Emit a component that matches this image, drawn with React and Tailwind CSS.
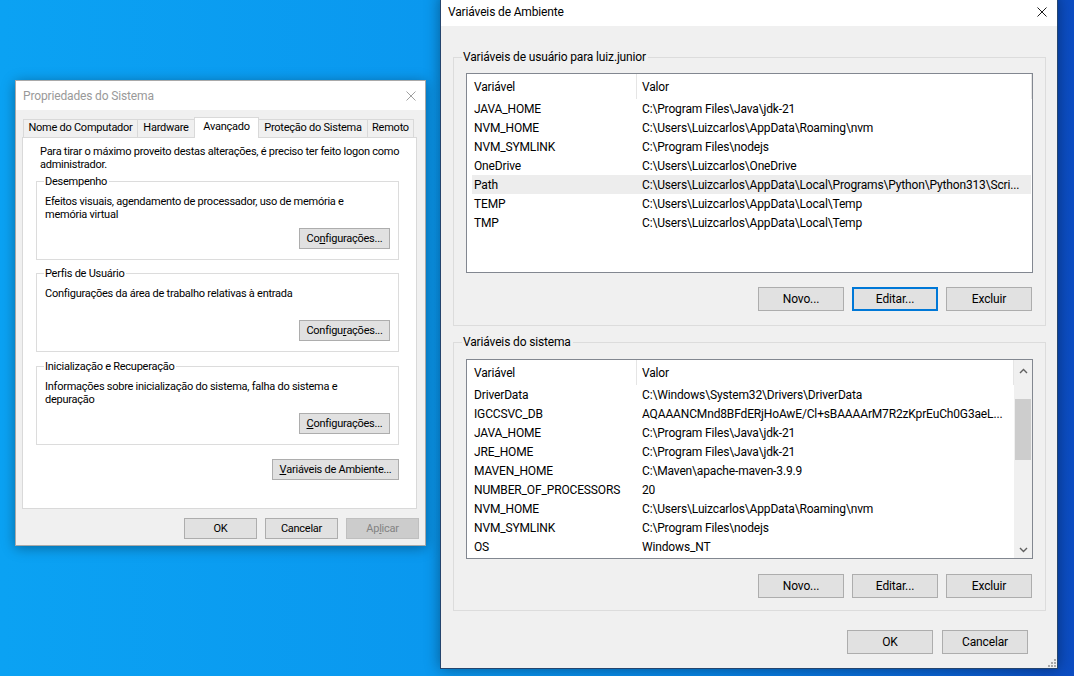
import clsx from 'clsx';

const USER_VARS = [
  ['JAVA_HOME', 'C:\\Program Files\\Java\\jdk-21'],
  ['NVM_HOME', 'C:\\Users\\Luizcarlos\\AppData\\Roaming\\nvm'],
  ['NVM_SYMLINK', 'C:\\Program Files\\nodejs'],
  ['OneDrive', 'C:\\Users\\Luizcarlos\\OneDrive'],
  ['Path', 'C:\\Users\\Luizcarlos\\AppData\\Local\\Programs\\Python\\Python313\\Scri...', true],
  ['TEMP', 'C:\\Users\\Luizcarlos\\AppData\\Local\\Temp'],
  ['TMP', 'C:\\Users\\Luizcarlos\\AppData\\Local\\Temp'],
];

const SYSTEM_VARS = [
  ['DriverData', 'C:\\Windows\\System32\\Drivers\\DriverData'],
  ['IGCCSVC_DB', 'AQAAANCMnd8BFdERjHoAwE/Cl+sBAAAArM7R2zKprEuCh0G3aeL...'],
  ['JAVA_HOME', 'C:\\Program Files\\Java\\jdk-21'],
  ['JRE_HOME', 'C:\\Program Files\\Java\\jdk-21'],
  ['MAVEN_HOME', 'C:\\Maven\\apache-maven-3.9.9'],
  ['NUMBER_OF_PROCESSORS', '20'],
  ['NVM_HOME', 'C:\\Users\\Luizcarlos\\AppData\\Roaming\\nvm'],
  ['NVM_SYMLINK', 'C:\\Program Files\\nodejs'],
  ['OS', 'Windows_NT'],
];

const TABS = [
  ['Nome do Computador', 'w-[115px]'],
  ['Hardware', 'w-[58px]'],
  ['Avançado', 'w-[65px]', true],
  ['Proteção do Sistema', 'w-[110px]'],
  ['Remoto', 'w-[47px]'],
];

function WinButton({ children, className, focused, disabled }) {
  return (
    <button
      type="button"
      className={clsx(
        'flex shrink-0 items-center justify-center leading-none',
        disabled
          ? 'border border-[#bfbfbf] bg-[#cccccc] text-[#838383]'
          : focused
            ? 'border-2 border-[#0078d7] bg-[#e1e1e1]'
            : 'border border-[#adadad] bg-[#e1e1e1]',
        className,
      )}
    >
      {children}
    </button>
  );
}

function CloseX({ color }) {
  return (
    <svg width="10" height="10" viewBox="0 0 10 10" className="block">
      <path d="M0.5 0.5L9.5 9.5M9.5 0.5L0.5 9.5" stroke={color} strokeWidth="1" fill="none" />
    </svg>
  );
}

function Chevron({ up }) {
  return (
    <svg width="9" height="6" viewBox="0 0 9 6" className="block">
      <path d={up ? 'M1 5L4.5 1.5L8 5' : 'M1 1L4.5 4.5L8 1'} stroke="#606060" strokeWidth="1.4" fill="none" />
    </svg>
  );
}

// groupbox on the "Avançado" tab
function Group({ label, className, children, button }) {
  return (
    <fieldset className={clsx('border border-[#dcdcdc] px-[8px] pb-[10px]', className)}>
      <legend className="-ml-px pl-[1px] pr-[2px] leading-[13px]">{label}</legend>
      <div className="mt-[7px] min-h-[26px] whitespace-nowrap leading-[13px]">{children}</div>
      <div className="mt-[7px] flex justify-end">
        <WinButton className="h-[21px] w-[91px]">{button}</WinButton>
      </div>
    </fieldset>
  );
}

function SystemProperties() {
  return (
    <div className="absolute left-[15px] top-[80px] flex h-[466px] w-[411px] flex-col border border-[#a9a9a9] bg-[#f0f0f0] text-[11px] tracking-[-0.25px] text-black shadow-[0_2px_12px_rgba(0,0,0,0.35)]">
      <div className="flex h-[29px] shrink-0 items-center justify-between bg-white pl-[7px] pr-[9px]">
        <span className="text-[12px] tracking-[-0.15px] text-[#999999]">Propriedades do Sistema</span>
        <CloseX color="#a0a0a0" />
      </div>

      <div className="flex flex-1 flex-col px-[6px] pt-[7px]">
        <div className="flex items-end pl-[1px]">
          {TABS.map(([label, w, active], i) => (
            <div
              key={label}
              className={clsx(
                'flex items-center justify-center whitespace-nowrap border border-b-0 border-[#d9d9d9]',
                w,
                i > 0 && '-ml-px',
                active ? 'relative z-10 -mb-px h-[21px] bg-white pb-[2px]' : 'h-[18px] bg-[#f0f0f0]',
              )}
            >
              {label}
            </div>
          ))}
        </div>

        <div className="flex h-[372px] w-[395px] flex-col border border-[#d9d9d9] bg-white pl-[13px] pr-[17px] pt-[7px]">
          <p className="ml-[4px] whitespace-nowrap leading-[13px]">
            Para tirar o máximo proveito destas alterações, é preciso ter feito logon como
            <br />
            administrador.
          </p>

          <Group label="Desempenho" className="mt-[4px]" button={<>Co<u>n</u>figurações...</>}>
            Efeitos visuais, agendamento de processador, uso de memória e
            <br />
            memória virtual
          </Group>

          <Group label="Perfis de Usuário" className="mt-[7px]" button={<>Configu<u>r</u>ações...</>}>
            Configurações da área de trabalho relativas à entrada
          </Group>

          <Group label="Inicialização e Recuperação" className="mt-[8px]" button={<><u>C</u>onfigurações...</>}>
            Informações sobre inicialização do sistema, falha do sistema e
            <br />
            depuração
          </Group>

          <div className="mt-[14px] flex justify-end">
            <WinButton className="h-[21px] w-[127px]">
              <u>V</u>ariáveis de Ambiente...
            </WinButton>
          </div>
        </div>

        <div className="mt-[9px] flex justify-end gap-[8px]">
          <WinButton className="h-[21px] w-[73px]">OK</WinButton>
          <WinButton className="h-[21px] w-[73px]">Cancelar</WinButton>
          <WinButton className="h-[21px] w-[73px]" disabled>
            Ap<u>l</u>icar
          </WinButton>
        </div>
      </div>
    </div>
  );
}

function ScrollBar() {
  return (
    <div className="flex w-[18px] shrink-0 flex-col bg-[#f0f0f0]">
      <div className="flex h-[21px] items-center justify-center">
        <Chevron up />
      </div>
      <div className="mx-[1px] mt-[18px] h-[61px] bg-[#cdcdcd]" />
      <div className="flex-1" />
      <div className="flex h-[17px] items-center justify-center">
        <Chevron />
      </div>
    </div>
  );
}

function VarList({ rows, scroll, className }) {
  return (
    <div className={clsx('mx-[12px] flex h-[200px] border border-[#828790] bg-white', className)}>
      <div className="min-w-0 flex-1 overflow-hidden">
        <div className="flex h-[25px]">
          <div className="flex w-[170px] shrink-0 items-center border-r border-[#e5e5e5] pl-[7px]">Variável</div>
          <div
            className={clsx(
              'flex items-center border-r border-[#e5e5e5] pl-[5px]',
              scroll ? 'flex-1' : 'w-[395px]',
            )}
          >
            Valor
          </div>
        </div>
        {rows.map(([name, value, hl]) => (
          <div
            key={name}
            className={clsx(
              'ml-[5px] flex h-[19px] items-center whitespace-nowrap pt-px',
              scroll ? 'w-[541px]' : 'w-[559px]',
              hl && 'bg-[#ededed]',
            )}
          >
            <div className="w-[164px] shrink-0 overflow-hidden pl-[2px]">{name}</div>
            <div className="min-w-0 flex-1 overflow-hidden pl-[6px]">{value}</div>
          </div>
        ))}
      </div>
      {scroll && <ScrollBar />}
    </div>
  );
}

function VarGroup({ label, rows, scroll, className, listGap, btnGap, bottom }) {
  return (
    <fieldset className={clsx('border border-[#dcdcdc]', bottom, className)}>
      <legend className="ml-[8px] pl-[1px] pr-[2px] leading-[16px]">{label}</legend>
      <VarList rows={rows} scroll={scroll} className={listGap} />
      <div className={clsx('mr-[13px] flex justify-end gap-[8px]', btnGap)}>
        <WinButton className="h-[24px] w-[86px]">Novo...</WinButton>
        <WinButton className="h-[24px] w-[86px]" focused={!scroll}>
          Editar...
        </WinButton>
        <WinButton className="h-[24px] w-[86px]">Excluir</WinButton>
      </div>
    </fieldset>
  );
}

function EnvironmentVariables() {
  return (
    <div className="absolute left-[440px] top-[-5px] flex h-[674px] w-[618px] flex-col border border-[#25456e] bg-[#f0f0f0] text-[12px] tracking-[-0.15px] text-black shadow-[0_0_14px_rgba(0,0,0,0.4)]">
      <div className="flex h-[30px] shrink-0 items-center justify-between bg-white pl-[7px] pr-[10px] pt-px">
        <span>Variáveis de Ambiente</span>
        <CloseX color="#1a1a1a" />
      </div>

      <div className="flex flex-1 flex-col pl-[12px] pr-[11px] pt-[23px]">
        <VarGroup
          label="Variáveis de usuário para luiz.junior"
          rows={USER_VARS}
          listGap="mt-[8px]"
          btnGap="mt-[14px]"
          bottom="pb-[14px]"
        />
        <VarGroup
          label="Variáveis do sistema"
          rows={SYSTEM_VARS}
          scroll
          className="mt-[8px]"
          listGap="mt-[9px]"
          btnGap="mt-[15px]"
          bottom="pb-[12px]"
        />
        <div className="mr-[18px] mt-[19px] flex justify-end gap-[9px]">
          <WinButton className="h-[24px] w-[86px]">OK</WinButton>
          <WinButton className="h-[24px] w-[86px]">Cancelar</WinButton>
        </div>
      </div>

      {/* resize grip */}
      <svg width="8" height="8" viewBox="0 0 8 8" className="absolute bottom-[1px] right-[1px]">
        <g fill="#a8a8a8">
          <rect x="6" y="0" width="2" height="2" />
          <rect x="3" y="3" width="2" height="2" />
          <rect x="6" y="3" width="2" height="2" />
          <rect x="0" y="6" width="2" height="2" />
          <rect x="3" y="6" width="2" height="2" />
          <rect x="6" y="6" width="2" height="2" />
        </g>
      </svg>
    </div>
  );
}

export default function App() {
  return (
    <div className="relative h-[676px] w-[1074px] overflow-hidden bg-[linear-gradient(90deg,#0ba2f3_0%,#0a98ef_40%,#0786e7_65%,#0a63d5_88%,#0c4cc2_100%)] font-['Roboto','Liberation_Sans',sans-serif]">
      <SystemProperties />
      <EnvironmentVariables />
    </div>
  );
}
